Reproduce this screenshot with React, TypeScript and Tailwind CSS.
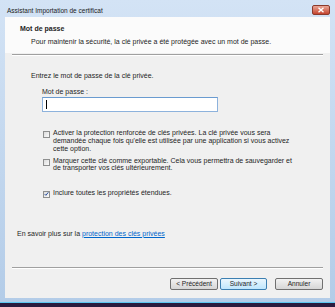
function Checkbox({ checked }: { checked?: boolean }) {
  return (
    <div className="mt-[2px] w-[7px] h-[7px] shrink-0 border border-[#8e8f8f] bg-gradient-to-br from-[#dcdcdc] to-[#fbfbfb] flex items-center justify-center">
      {checked && (
        <svg width="6" height="6" viewBox="0 0 6 6">
          <path d="M0.8 3.1 L2.3 4.6 L5.2 0.9" stroke="#2a4f9c" strokeWidth="1.2" fill="none" />
        </svg>
      )}
    </div>
  );
}

function Button({ label, focused }: { label: string; focused?: boolean }) {
  return (
    <div
      className={
        focused
          ? "w-[47px] h-[12px] rounded-[2px] border border-[#3c7fb1] bg-gradient-to-b from-[#eaf6fd] to-[#bee6fd] flex items-center justify-center text-[6.6px] text-[#1e1e1e]"
          : "w-[48px] h-[12px] rounded-[2px] border border-[#707070] bg-gradient-to-b from-[#f2f2f2] to-[#d6d6d6] flex items-center justify-center text-[6.6px] text-[#1e1e1e]"
      }
    >
      {label}
    </div>
  );
}

export default function App() {
  return (
    <div
      className="w-[335px] h-[307px] overflow-hidden bg-[#2b1b3f]"
      style={{ fontFamily: '"Liberation Sans", Arial, sans-serif' }}
    >
      <div className="h-[303px] flex flex-col bg-gradient-to-b from-[#d3e3f5] to-[#b3cce8] border-b border-[#5cc8f2]">
        {/* title bar */}
        <div className="h-[17px] shrink-0 flex items-start justify-between pl-[7px] pr-[5px]">
          <span className="mt-[6px] text-[6.5px] leading-[9px] text-[#1a1a1a]">
            Assistant Importation de certificat
          </span>
          <div className="mt-[5px] w-[18px] h-[10px] rounded-[2px] border border-[#8a3a2c] bg-gradient-to-b from-[#e9a596] to-[#c4432e] flex items-center justify-center">
            <svg width="8" height="6" viewBox="0 0 8 6">
              <path d="M1.5 0.8 L6.5 5.2 M6.5 0.8 L1.5 5.2" stroke="#ffffff" strokeWidth="1.4" />
            </svg>
          </div>
        </div>

        {/* client area */}
        <div className="flex-1 mx-[5px] mb-[4px] bg-[#f0f0f0] flex flex-col text-[7px] leading-[7.7px] text-[#1e1e1e]">
          <div className="h-[36px] shrink-0 bg-[#fbfbfb] pl-[15px] pt-[8px]">
            <div className="font-bold">Mot de passe</div>
            <div className="mt-[5px] ml-[11px]">
              Pour maintenir la sécurité, la clé privée a été protégée avec un mot de passe.
            </div>
          </div>
          <div className="mt-[1px] mx-[7px] h-[2px] border-t border-[#a0a0a0] border-b border-b-white" />

          <div className="ml-[26px] mt-[16px]">Entrez le mot de passe de la clé privée.</div>
          <div className="ml-[37px] mt-[8px]">Mot de passe :</div>
          <div className="ml-[37px] mt-[2px] w-[176px] h-[15px] bg-white border border-[#8db2dc] border-t-[#6a9bd0] flex items-center pl-[3px]">
            <div className="w-[1px] h-[9px] bg-black" />
          </div>

          <div className="ml-[38px] mt-[17px] flex gap-[3px]">
            <Checkbox />
            <div>
              Activer la protection renforcée de clés privées. La clé privée vous sera
              <br />
              demandée chaque fois qu'elle est utilisée par une application si vous activez
              <br />
              cette option.
            </div>
          </div>
          <div className="ml-[38px] mt-[4px] flex gap-[3px]">
            <Checkbox />
            <div>
              Marquer cette clé comme exportable. Cela vous permettra de sauvegarder et
              <br />
              de transporter vos clés ultérieurement.
            </div>
          </div>
          <div className="ml-[38px] mt-[17px] flex gap-[3px]">
            <Checkbox checked />
            <div>Inclure toutes les propriétés étendues.</div>
          </div>

          <div className="ml-[12px] mt-[32px]">
            En savoir plus sur la{" "}
            <span className="text-[#0066cc] underline">protection des clés privées</span>
          </div>

          <div className="mt-[29px] mx-[7px] h-[2px] border-t border-[#a0a0a0] border-b border-b-white" />

          <div className="mt-[9px] mr-[7px] flex justify-end">
            <div className="flex gap-[2px]">
              <Button label="< Précédent" />
              <Button label="Suivant >" focused />
            </div>
            <div className="ml-[8px]">
              <Button label="Annuler" />
            </div>
          </div>
        </div>
      </div>
    </div>
  );
}
